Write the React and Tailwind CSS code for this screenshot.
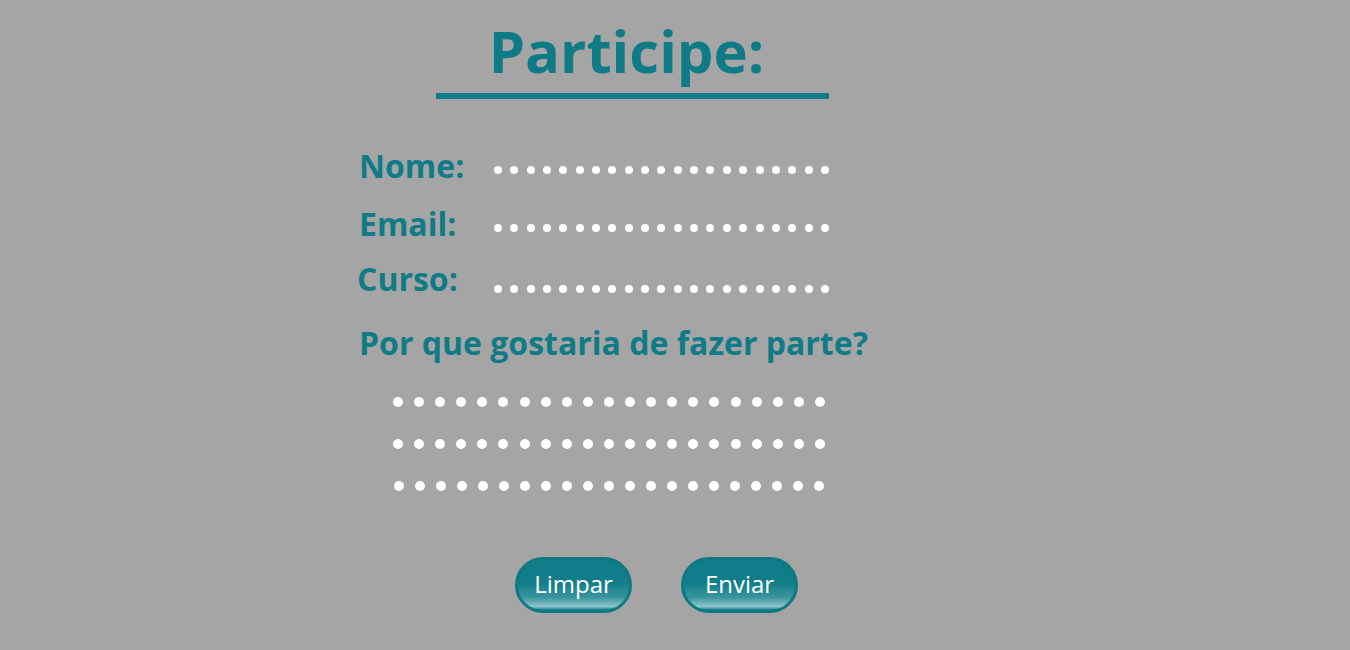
import React from 'react';

const Dots = ({ count = 21, size, gap, className = '' }) => (
  <div className={`flex ${gap} ${className}`}>
    {Array.from({ length: count }).map((_, i) => (
      <span key={i} className={`${size} rounded-full bg-white shrink-0`} />
    ))}
  </div>
);

const fields = [
  { label: 'Nome:', text: 'mt-[0px]', dots: 'mt-[7px]' },
  { label: 'Email:', text: 'mt-[0px]', dots: 'mt-[7px]' },
  { label: 'Curso:', text: '-mt-[6px] -ml-[2px] mr-[2px]', dots: 'mt-[14px]' },
];

const PillButton = ({ children }) => (
  <button className="w-[117px] h-[56px] rounded-full border-[3px] border-[#0f7883] bg-[linear-gradient(to_bottom,#107d89_0%,#107d89_45%,#3b959f_75%,#8cc5cb_93%,#107d89_100%)] text-white text-[24px] leading-none pb-[2px]">
    {children}
  </button>
);

export default function App() {
  return (
    <div className="w-full min-h-[650px] bg-[#a5a5a5] font-['Open_Sans',sans-serif] text-[#0f7b87]">
      <div className="pl-[357px] pt-[8px]">
        <div className="ml-[79px] w-[393px] flex flex-col items-center">
          <h1 className="text-[58px] font-bold leading-[85px] pr-[12px]">Participe:</h1>
          <div className="w-full h-[6px] bg-[#0f7b87]" />
        </div>

        <div className="mt-[48px] flex flex-col gap-[20px]">
          {fields.map((f) => (
            <div key={f.label} className="flex items-center h-[38px]">
              <span className={`w-[137px] pl-[2px] text-[32px] font-bold leading-none ${f.text}`}>{f.label}</span>
              <Dots size="w-[8px] h-[8px]" gap="gap-[8.35px]" className={f.dots} />
            </div>
          ))}
        </div>

        <p className="mt-[18px] pl-[2px] text-[32px] font-bold leading-[48px]">Por que gostaria de fazer parte?</p>

        <div className="mt-[30px] pl-[36px] flex flex-col gap-[32px]">
          <Dots size="w-[10px] h-[10px]" gap="gap-[11.1px]" />
          <Dots size="w-[10px] h-[10px]" gap="gap-[11.1px]" />
          <Dots size="w-[10px] h-[10px]" gap="gap-[11px]" className="pl-[1px]" />
        </div>

        <div className="mt-[66px] ml-[158px] flex gap-[49px]">
          <PillButton>Limpar</PillButton>
          <PillButton>Enviar</PillButton>
        </div>
      </div>
    </div>
  );
}
